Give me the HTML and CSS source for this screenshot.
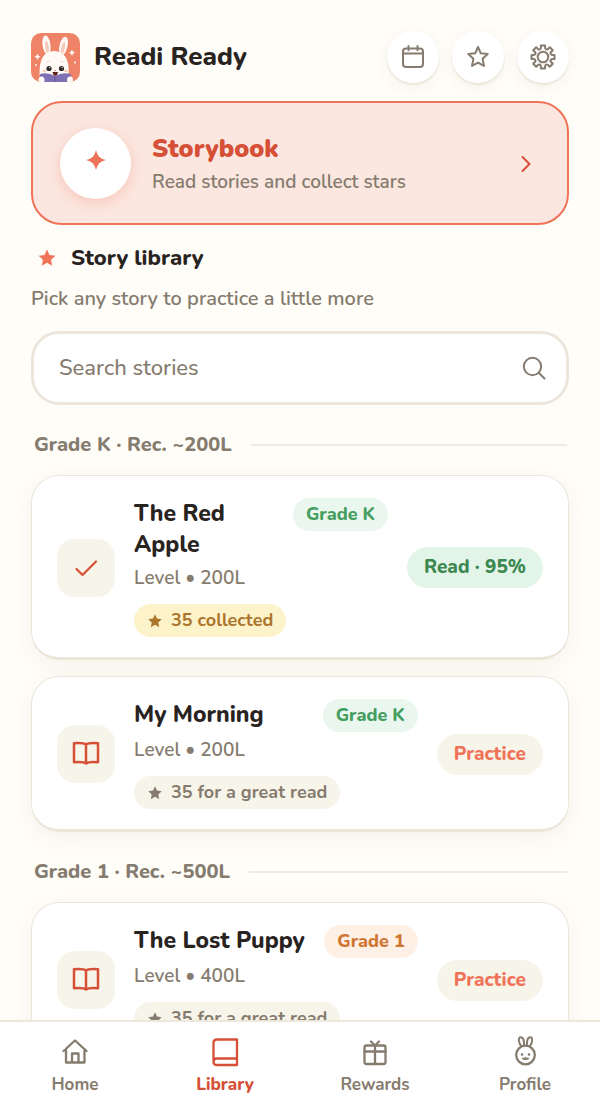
FILE: index.html
```html
<!DOCTYPE html>
<html lang="en">
<head>
<meta charset="utf-8">
<meta name="viewport" content="width=device-width, initial-scale=1">
<title>Readi Ready</title>
<link rel="stylesheet" href="styles.css">
</head>
<body>
<svg class="sprite" aria-hidden="true">
  <symbol id="star" viewBox="0 0 20 20"><path d="M10 1.600l2.500 5.300 5.900.8-4.300 4.100 1.100 5.900-5.200-2.900-5.200 2.900 1.100-5.900L1.600 7.700l5.900-.8z" fill="currentColor"/></symbol>
  <symbol id="book" viewBox="0 0 28 28"><path d="M14 4.500C12 2.700 8 2.800 2 3.200V22.200C8 21.700 12 21.800 14 23.500C16 21.800 20 21.700 26 22.200V3.200C20 2.800 16 2.700 14 4.500V23.500" fill="none" stroke="currentColor" stroke-width="2.500" stroke-linejoin="round" stroke-linecap="round"/></symbol>
</svg>
<div class="app">
  <main class="content">
    <header class="header">
      <svg class="logo" viewBox="0 0 49 49" role="img" aria-label="Readi Ready logo">
        <defs><clipPath id="logo-clip"><rect width="49" height="49" rx="10"/></clipPath></defs>
        <g clip-path="url(#logo-clip)">
          <rect width="49" height="49" fill="#ee8368"/>
          <ellipse cx="15.500" cy="12" rx="4" ry="9.500" transform="rotate(-8 15.500 12)" fill="#fffaf5"/>
          <ellipse cx="32.500" cy="13" rx="4" ry="9.500" transform="rotate(13 32.500 13)" fill="#fffaf5"/>
          <ellipse cx="16" cy="14" rx="1.800" ry="6.500" transform="rotate(-8 16 14)" fill="#f6c9bb"/>
          <ellipse cx="32" cy="15" rx="1.800" ry="6.500" transform="rotate(13 32 15)" fill="#f6c9bb"/>
          <path d="M8.500 42C8 26 13 18 23 18s16 8 14.500 24z" fill="#fffaf5"/>
          <path d="M9 41q8-2 15 2 7-4 16-2v8H9z" fill="#7e72b4"/>
          <path d="M24 43v6" stroke="#675b9f"/>
          <ellipse cx="10.500" cy="47" rx="3" ry="3.500" fill="#fffaf5"/>
          <ellipse cx="39" cy="47" rx="3" ry="3.500" fill="#fffaf5"/>
          <circle cx="18" cy="35.500" r="2.600" fill="#302829"/><circle cx="30.500" cy="35.500" r="2.600" fill="#302829"/>
          <circle cx="18.700" cy="34.600" r=".7" fill="#fff"/><circle cx="31.200" cy="34.600" r=".7" fill="#fff"/>
          <path d="M15.500 29l3-1M29.500 28l3 1" stroke="#d9cdc6" stroke-width=".8"/>
          <ellipse cx="13.500" cy="38" rx="2" ry="1.200" fill="#f9cfc2"/><ellipse cx="35" cy="38" rx="2" ry="1.200" fill="#f9cfc2"/>
          <path d="M23 37h2.500l-1.200 1.300z" fill="#d56c5c"/>
          <path d="M21.500 39h5.500q-.5 3.500-2.700 3.500T21.500 39z" fill="#5b2622"/>
          <path d="M6.500 21l.7 2 2 .7-2 .7-.7 2-.7-2-2-.7 2-.7zM41 17l.7 2 2 .7-2 .7-.7 2-.7-2-2-.7 2-.7z" fill="#fff" stroke="#fff" stroke-width=".5"/>
          <circle cx="5" cy="32" r=".9" fill="#fff"/><circle cx="44" cy="29.500" r="1" fill="#fff"/>
        </g>
      </svg>
      <h1 class="brand">Readi Ready</h1>
      <div class="actions">
        <button class="round-button" aria-label="Calendar"><svg viewBox="0 0 26 26"><rect x="3" y="4.500" width="20" height="18.500" rx="3"/><path d="M3 9.500h20M8.500 2v4.200M17.500 2v4.200"/></svg></button>
        <button class="round-button" aria-label="Stars"><svg viewBox="0 0 26 26"><path d="M13 3l2.800 6.300 6.900.7-5.100 4.700 1.400 7.200-6-3.200-6 3.200 1.400-7.200L3.300 10l6.900-.7z"/></svg></button>
        <button class="round-button" aria-label="Settings"><svg viewBox="-13 -13 26 26"><path d="M-2.100-8.900V-11.500H2.100V-8.900Q3.300-6.600 4.800-7.800L6.800-9.800L9.800-6.800L7.800-4.800Q6.600-3.300 8.900-2.100H11.500V2.100H8.900Q6.600 3.300 7.800 4.800L9.800 6.800L6.800 9.800L4.800 7.800Q3.300 6.600 2.100 8.900V11.500H-2.100V8.900Q-3.300 6.600-4.800 7.800L-6.800 9.800L-9.800 6.800L-7.800 4.800Q-6.600 3.300-8.900 2.100H-11.500V-2.100H-8.900Q-6.600-3.300-7.800-4.800L-9.800-6.800L-6.800-9.800L-4.800-7.800Q-3.300-6.600-2.100-8.900Z"/><circle r="5.300"/></svg></button>
      </div>
    </header>

    <a class="storybook" href="#storybook">
      <span class="storybook-icon"><svg viewBox="0 0 20 20"><path d="M10 0Q11.500 8.500 20 10Q11.500 11.500 10 20Q8.500 11.500 0 10Q8.500 8.500 10 0Z"/></svg></span>
      <span class="storybook-text"><strong class="storybook-title">Storybook</strong><span class="storybook-note">Read stories and collect stars</span></span>
      <svg class="chevron" viewBox="0 0 10 18"><path d="M1.500 2l7 7-7 7"/></svg>
    </a>

    <h2 class="library-title"><svg class="title-star"><use href="#star"/></svg>Story library</h2>
    <p class="library-note">Pick any story to practice a little more</p>

    <label class="search">
      <input type="search" placeholder="Search stories" aria-label="Search stories">
      <svg viewBox="0 0 24 24"><circle cx="10.500" cy="10.500" r="8.700"/><path d="M17 17l5.500 5.500"/></svg>
    </label>

    <section class="grade">
      <h3 class="grade-title">Grade K · Rec. ~200L</h3>
      <article class="story">
        <span class="tile"><svg viewBox="0 0 28 28"><path d="M4.500 15l6 6L24 7.500" fill="none" stroke="currentColor" stroke-width="2.200" stroke-linecap="round" stroke-linejoin="round"/></svg></span>
        <div class="story-body">
          <div class="story-head"><h4 class="story-title">The Red Apple</h4><span class="badge badge-green">Grade K</span></div>
          <p class="level">Level • 200L</p>
          <span class="badge reward badge-gold"><svg><use href="#star"/></svg>35 collected</span>
        </div>
        <button class="status status-read">Read · 95%</button>
      </article>
      <article class="story">
        <span class="tile"><svg><use href="#book"/></svg></span>
        <div class="story-body">
          <div class="story-head"><h4 class="story-title">My Morning</h4><span class="badge badge-green">Grade K</span></div>
          <p class="level">Level • 200L</p>
          <span class="badge reward badge-plain"><svg><use href="#star"/></svg>35 for a great read</span>
        </div>
        <button class="status">Practice</button>
      </article>
    </section>

    <section class="grade">
      <h3 class="grade-title">Grade 1 · Rec. ~500L</h3>
      <article class="story">
        <span class="tile"><svg><use href="#book"/></svg></span>
        <div class="story-body">
          <div class="story-head"><h4 class="story-title">The Lost Puppy</h4><span class="badge badge-orange">Grade 1</span></div>
          <p class="level">Level • 400L</p>
          <span class="badge reward badge-plain"><svg><use href="#star"/></svg>35 for a great read</span>
        </div>
        <button class="status">Practice</button>
      </article>
    </section>
  </main>

  <nav class="tabs" aria-label="Main">
    <a class="tab" href="#home"><svg viewBox="0 0 30 30"><path d="M3.500 14L15 3.500 26.500 14M6 12v13.500h18.500V12M12 25V16.500h6.500V25"/></svg>Home</a>
    <a class="tab tab-active" href="#library" aria-current="page"><svg viewBox="0 0 30 30"><path d="M27 21.500V2.500H7Q3.500 2.500 3.500 6V25Q3.500 28 7 28H27V21.500H7Q3.500 21.500 3.500 25"/></svg>Library</a>
    <a class="tab" href="#rewards"><svg viewBox="0 0 30 30"><rect x="4.500" y="8.500" width="21" height="18.500" rx="2"/><path d="M4.500 14.500h21M15 8.500v18.500M15 8.500L11 4.500M15 8.500l4-4" /></svg>Rewards</a>
    <a class="tab" href="#profile"><svg viewBox="0 0 30 30"><circle cx="15.500" cy="18" r="9.300"/><path d="M11.300 9.300C8.300 5.500 8 .2 10.800 .2S14.300 4.500 14 8.500M19.700 9.300C22.700 5.500 23 .2 20.200 .2S16.700 4.500 17 8.500" stroke-width="2"/><path d="M13 21.500q1.800 1.200 2.500-.6.700 1.800 2.500.6" stroke-width="2"/><path d="M12 17.500h.1M19 17.500h.1" stroke-width="2.600"/></svg>Profile</a>
  </nav>
</div>
</body>
</html>
```
FILE: styles.css
```css
:root {
  --ink: #29231f;
  --muted: #857b6e;
  --coral: #ef7358;
  --coral-dark: #d55036;
  --line: #ebe6d9;
  --sand: #f7f4ea;
}

* { box-sizing: border-box; }

body {
  margin: 0;
  background: #fffdf8;
  color: var(--ink);
  font-family: Nunito, Lato, "Open Sans", sans-serif;
}

h1, h2, h3, h4, p { margin: 0; }
a { color: inherit; text-decoration: none; }
button { border: 0; font: inherit; cursor: pointer; }
svg { display: block; flex: none; overflow: visible; }
.sprite { display: none; }

.app {
  display: flex;
  flex-direction: column;
  height: 100vh;
}

.content {
  flex: 1;
  min-height: 0;
  overflow-y: auto;
  scrollbar-width: none;
  padding: 31px 31px 24px;
}

.header {
  display: flex;
  align-items: center;
  gap: 14px;
  margin-bottom: 18px;
}

.logo { width: 49px; height: 49px; }

.brand {
  flex: 1;
  font-size: 26px;
  line-height: 34px;
  font-weight: 800;
}

.actions { display: flex; gap: 13px; }

.round-button {
  display: grid;
  place-items: center;
  width: 52px;
  height: 52px;
  padding: 0;
  border-radius: 50%;
  background: #fff;
  color: var(--muted);
  box-shadow: 0 2px 2px #ebe6d9, 0 4px 16px rgba(90, 70, 40, .06);
}

.round-button svg {
  width: 26px;
  height: 26px;
  fill: none;
  stroke: currentColor;
  stroke-width: 2;
  stroke-linecap: round;
  stroke-linejoin: round;
}

.storybook {
  display: flex;
  align-items: center;
  gap: 21px;
  padding: 25px 36px 24px 27px;
  border: 2px solid var(--coral);
  border-radius: 31px;
  background: #fbe7e0;
}

.storybook-icon {
  display: grid;
  place-items: center;
  width: 71px;
  height: 71px;
  padding-bottom: 8px;
  border-radius: 50%;
  background: #fff;
  box-shadow: 0 4px 14px rgba(239, 115, 88, .28);
}

.storybook-icon svg { width: 20px; height: 20px; fill: var(--coral); }

.storybook-text {
  flex: 1;
  display: flex;
  flex-direction: column;
}

.storybook-title {
  color: var(--coral-dark);
  font-size: 25px;
  line-height: 36px;
  font-weight: 900;
}

.storybook-note {
  color: var(--muted);
  font-size: 19px;
  line-height: 30px;
  font-weight: 600;
}

.chevron {
  width: 10px;
  height: 18px;
  fill: none;
  stroke: var(--coral-dark);
  stroke-width: 2;
  stroke-linecap: round;
  stroke-linejoin: round;
}

.library-title {
  display: flex;
  align-items: center;
  gap: 14px;
  margin-top: 16px;
  padding-left: 6px;
  font-size: 22px;
  line-height: 34px;
  font-weight: 800;
}

.title-star { width: 20px; height: 20px; color: var(--coral); }

.library-note {
  margin-top: 9px;
  color: var(--muted);
  font-size: 20px;
  line-height: 30px;
  font-weight: 600;
}

.search {
  display: flex;
  align-items: center;
  margin-top: 17px;
  padding: 0 20px 0 25px;
  height: 74px;
  border: 3px solid var(--line);
  border-radius: 28px;
  background: #fff;
}

.search input {
  flex: 1;
  min-width: 0;
  padding: 0;
  border: 0;
  outline: 0;
  background: none;
  color: var(--ink);
  font: inherit;
  font-size: 22px;
  font-weight: 500;
}

.search input::placeholder { color: var(--muted); opacity: 1; }

.search svg {
  width: 24px;
  height: 24px;
  fill: none;
  stroke: var(--muted);
  stroke-width: 2;
  stroke-linecap: round;
}

.grade {
  display: flex;
  flex-direction: column;
  gap: 16px;
  margin-top: 26px;
}

.grade-title {
  display: flex;
  align-items: center;
  gap: 19px;
  padding: 0 2px 0 3px;
  color: var(--muted);
  font-size: 20px;
  line-height: 28px;
  font-weight: 800;
}

.grade-title::after {
  content: "";
  flex: 1;
  height: 2px;
  background: #f0ebe0;
}

.story {
  display: flex;
  align-items: center;
  gap: 19px;
  padding: 22px 25px 20px;
  border: 1px solid var(--line);
  border-bottom-width: 3px;
  border-radius: 28px;
  background: #fff;
  box-shadow: 0 6px 24px rgba(90, 70, 40, .06);
}

.tile {
  display: grid;
  place-items: center;
  flex: none;
  width: 58px;
  height: 58px;
  border-radius: 18px;
  background: var(--sand);
  color: var(--coral-dark);
}

.tile svg { width: 28px; height: 28px; }

.story-body { flex: 1; min-width: 0; }

.story-head {
  display: flex;
  align-items: flex-start;
  justify-content: space-between;
  gap: 16px;
}

.story-title {
  font-size: 23px;
  line-height: 31px;
  font-weight: 800;
}

.level {
  margin: 5px 0 13px;
  color: var(--muted);
  font-size: 19px;
  line-height: 26px;
  font-weight: 600;
}

.badge {
  display: flex;
  align-items: center;
  gap: 8px;
  flex: none;
  width: fit-content;
  padding: 0 13px;
  border-radius: 17px;
  font-size: 18px;
  line-height: 33px;
  font-weight: 800;
  white-space: nowrap;
}

.badge svg { width: 16px; height: 16px; }
.reward { font-weight: 700; }
.badge-green { background: #e9f7ef; color: #459e60; }
.badge-orange { background: #fff0e5; color: #cf7732; }
.badge-gold { background: #fdf3cb; color: #ac752c; }
.badge-plain { background: var(--sand); color: var(--muted); }

.status {
  flex: none;
  padding: 0 17px;
  border-radius: 21px;
  background: var(--sand);
  color: var(--coral);
  font-size: 19px;
  line-height: 41px;
  font-weight: 800;
}

.status-read { background: #e3f5e9; color: #3b8850; }

.tabs {
  display: grid;
  grid-template-columns: repeat(4, 1fr);
  border-top: 2px solid #eee8dc;
  background: #fff;
}

.tab {
  display: flex;
  flex-direction: column;
  align-items: center;
  gap: 6px;
  padding: 15px 0 11px;
  color: var(--muted);
  font-size: 17px;
  line-height: 24px;
  font-weight: 700;
}

.tab svg {
  width: 30px;
  height: 30px;
  fill: none;
  stroke: currentColor;
  stroke-width: 2.3;
  stroke-linecap: round;
  stroke-linejoin: round;
}

.tab-active { color: var(--coral-dark); font-weight: 800; }
```
